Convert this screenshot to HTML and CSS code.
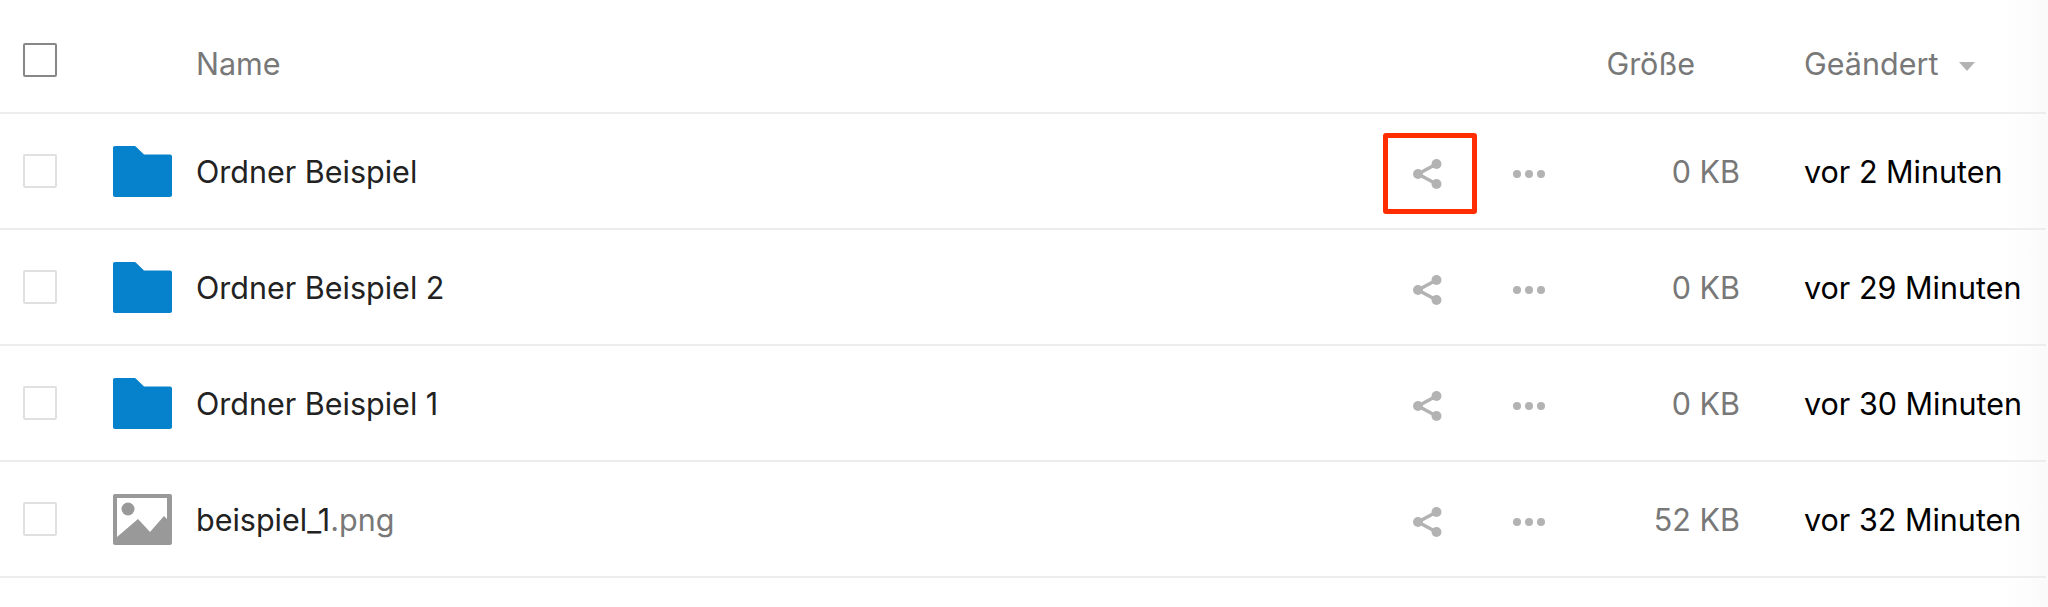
FILE: index.html
```html
<!DOCTYPE html>
<html lang="de">
<head>
  <meta charset="UTF-8" />
  <title>Dateien</title>
  <link rel="stylesheet" href="styles.css">
</head>
<body>
  <div class="file-list">
    <div class="row head">
      <div class="check-cell"><span class="check check-head"></span></div>
      <div class="icon-cell"></div>
      <div class="name">Name</div>
      <div class="size">Größe</div>
      <div class="date">Geändert <span class="sort-arrow"></span></div>
    </div>

    <div class="row">
      <div class="check-cell"><span class="check"></span></div>
      <div class="icon-cell"><svg class="file-icon" viewBox="0 0 59 51"><path fill="#0682cc" d="M2 0h19c1 0 1.600.3 2.300 1L31 8.500h26c1.200 0 2 .8 2 2V49c0 1.200-.8 2-2 2H2c-1.200 0-2-.8-2-2V2C0 .8.800 0 2 0z"/></svg></div>
      <div class="name">Ordner Beispiel</div>
      <div class="share share-marked"><svg class="share-icon" viewBox="0 0 32 32"><g fill="#b3b3b3" stroke="#b3b3b3"><circle cx="24.500" cy="6" r="5" stroke="none"/><circle cx="24.500" cy="26" r="5" stroke="none"/><circle cx="6" cy="16" r="5" stroke="none"/><path fill="none" stroke-width="3.500" d="M24.500 6L6 16l18.500 10"/></g></svg></div>
      <div class="more"><i></i><i></i><i></i></div>
      <div class="size">0 KB</div>
      <div class="date">vor 2 Minuten</div>
    </div>

    <div class="row">
      <div class="check-cell"><span class="check"></span></div>
      <div class="icon-cell"><svg class="file-icon" viewBox="0 0 59 51"><path fill="#0682cc" d="M2 0h19c1 0 1.600.3 2.300 1L31 8.500h26c1.200 0 2 .8 2 2V49c0 1.200-.8 2-2 2H2c-1.200 0-2-.8-2-2V2C0 .8.800 0 2 0z"/></svg></div>
      <div class="name">Ordner Beispiel 2</div>
      <div class="share"><svg class="share-icon" viewBox="0 0 32 32"><g fill="#b3b3b3" stroke="#b3b3b3"><circle cx="24.500" cy="6" r="5" stroke="none"/><circle cx="24.500" cy="26" r="5" stroke="none"/><circle cx="6" cy="16" r="5" stroke="none"/><path fill="none" stroke-width="3.500" d="M24.500 6L6 16l18.500 10"/></g></svg></div>
      <div class="more"><i></i><i></i><i></i></div>
      <div class="size">0 KB</div>
      <div class="date">vor 29 Minuten</div>
    </div>

    <div class="row">
      <div class="check-cell"><span class="check"></span></div>
      <div class="icon-cell"><svg class="file-icon" viewBox="0 0 59 51"><path fill="#0682cc" d="M2 0h19c1 0 1.600.3 2.300 1L31 8.500h26c1.200 0 2 .8 2 2V49c0 1.200-.8 2-2 2H2c-1.200 0-2-.8-2-2V2C0 .8.800 0 2 0z"/></svg></div>
      <div class="name">Ordner Beispiel 1</div>
      <div class="share"><svg class="share-icon" viewBox="0 0 32 32"><g fill="#b3b3b3" stroke="#b3b3b3"><circle cx="24.500" cy="6" r="5" stroke="none"/><circle cx="24.500" cy="26" r="5" stroke="none"/><circle cx="6" cy="16" r="5" stroke="none"/><path fill="none" stroke-width="3.500" d="M24.500 6L6 16l18.500 10"/></g></svg></div>
      <div class="more"><i></i><i></i><i></i></div>
      <div class="size">0 KB</div>
      <div class="date">vor 30 Minuten</div>
    </div>

    <div class="row">
      <div class="check-cell"><span class="check"></span></div>
      <div class="icon-cell"><svg class="file-icon" viewBox="0 0 59 51"><path fill="#999" fill-rule="evenodd" d="M2 0h55c1.200 0 2 .8 2 2v47c0 1.200-.8 2-2 2H2c-1.200 0-2-.8-2-2V2C0 .8.800 0 2 0zm2 4v39l21-18 12 13 14-16 3 3V4z"/><circle fill="#999" cx="15" cy="15" r="6.500"/></svg></div>
      <div class="name">beispiel_1<span class="ext">.png</span></div>
      <div class="share"><svg class="share-icon" viewBox="0 0 32 32"><g fill="#b3b3b3" stroke="#b3b3b3"><circle cx="24.500" cy="6" r="5" stroke="none"/><circle cx="24.500" cy="26" r="5" stroke="none"/><circle cx="6" cy="16" r="5" stroke="none"/><path fill="none" stroke-width="3.500" d="M24.500 6L6 16l18.500 10"/></g></svg></div>
      <div class="more"><i></i><i></i><i></i></div>
      <div class="size">52 KB</div>
      <div class="date">vor 32 Minuten</div>
    </div>
  </div>
</body>
</html>
```

FILE: styles.css
```css
html {
  height: 100%;
}
body {
  margin: 0;
  min-height: 100%;
  background: linear-gradient(to right, #fff 2005px, #fafafa);
  font-family: Inter, "Liberation Sans", sans-serif;
  font-size: 30.5px;
  color: #222;
  overflow: hidden;
}
.file-list {
  width: 2046px;
}
.row {
  display: flex;
  align-items: center;
  height: 114px;
  border-bottom: 2px solid #ededed;
}
.row.head {
  height: 112px;
  color: #787878;
}
.head .name,
.head .size,
.head .date {
  padding-top: 14px;
}
.check-cell {
  width: 113px;
  padding-left: 23px;
  box-sizing: border-box;
  display: flex;
}
.check {
  width: 34px;
  height: 34px;
  box-sizing: border-box;
  border: 2px solid #e0e0e0;
  border-radius: 2px;
}
.check-head {
  border-color: #878787;
  margin-top: 8px;
}
.icon-cell {
  width: 83px;
  display: flex;
}
.file-icon {
  width: 59px;
  height: 51px;
}
.name {
  flex: 1;
}
.ext {
  color: #787878;
}
.share {
  width: 94px;
  height: 81px;
  margin-top: 5px;
  box-sizing: border-box;
  padding-right: 4px;
  border: 5px solid transparent;
  border-radius: 3px;
  display: flex;
  align-items: center;
  justify-content: center;
}
.share-marked {
  border-color: #ff2d00;
}
.share-icon {
  width: 32px;
  height: 32px;
}
.more {
  width: 109px;
  margin-top: 5px;
  box-sizing: border-box;
  padding-right: 6px;
  display: flex;
  justify-content: center;
  gap: 4px;
}
.more i {
  width: 8px;
  height: 8px;
  border-radius: 50%;
  background: #b3b3b3;
}
.size {
  width: 154px;
  box-sizing: border-box;
  text-align: right;
  color: #787878;
}
.head .size {
  padding-right: 45px;
}
.date {
  width: 306px;
  box-sizing: border-box;
  padding-left: 64px;
  color: #000;
}
.head .date {
  color: #787878;
}
.sort-arrow {
  display: inline-block;
  margin-left: 12px;
  vertical-align: middle;
  border-left: 8px solid transparent;
  border-right: 8px solid transparent;
  border-top: 9px solid #b3b3b3;
}
```
